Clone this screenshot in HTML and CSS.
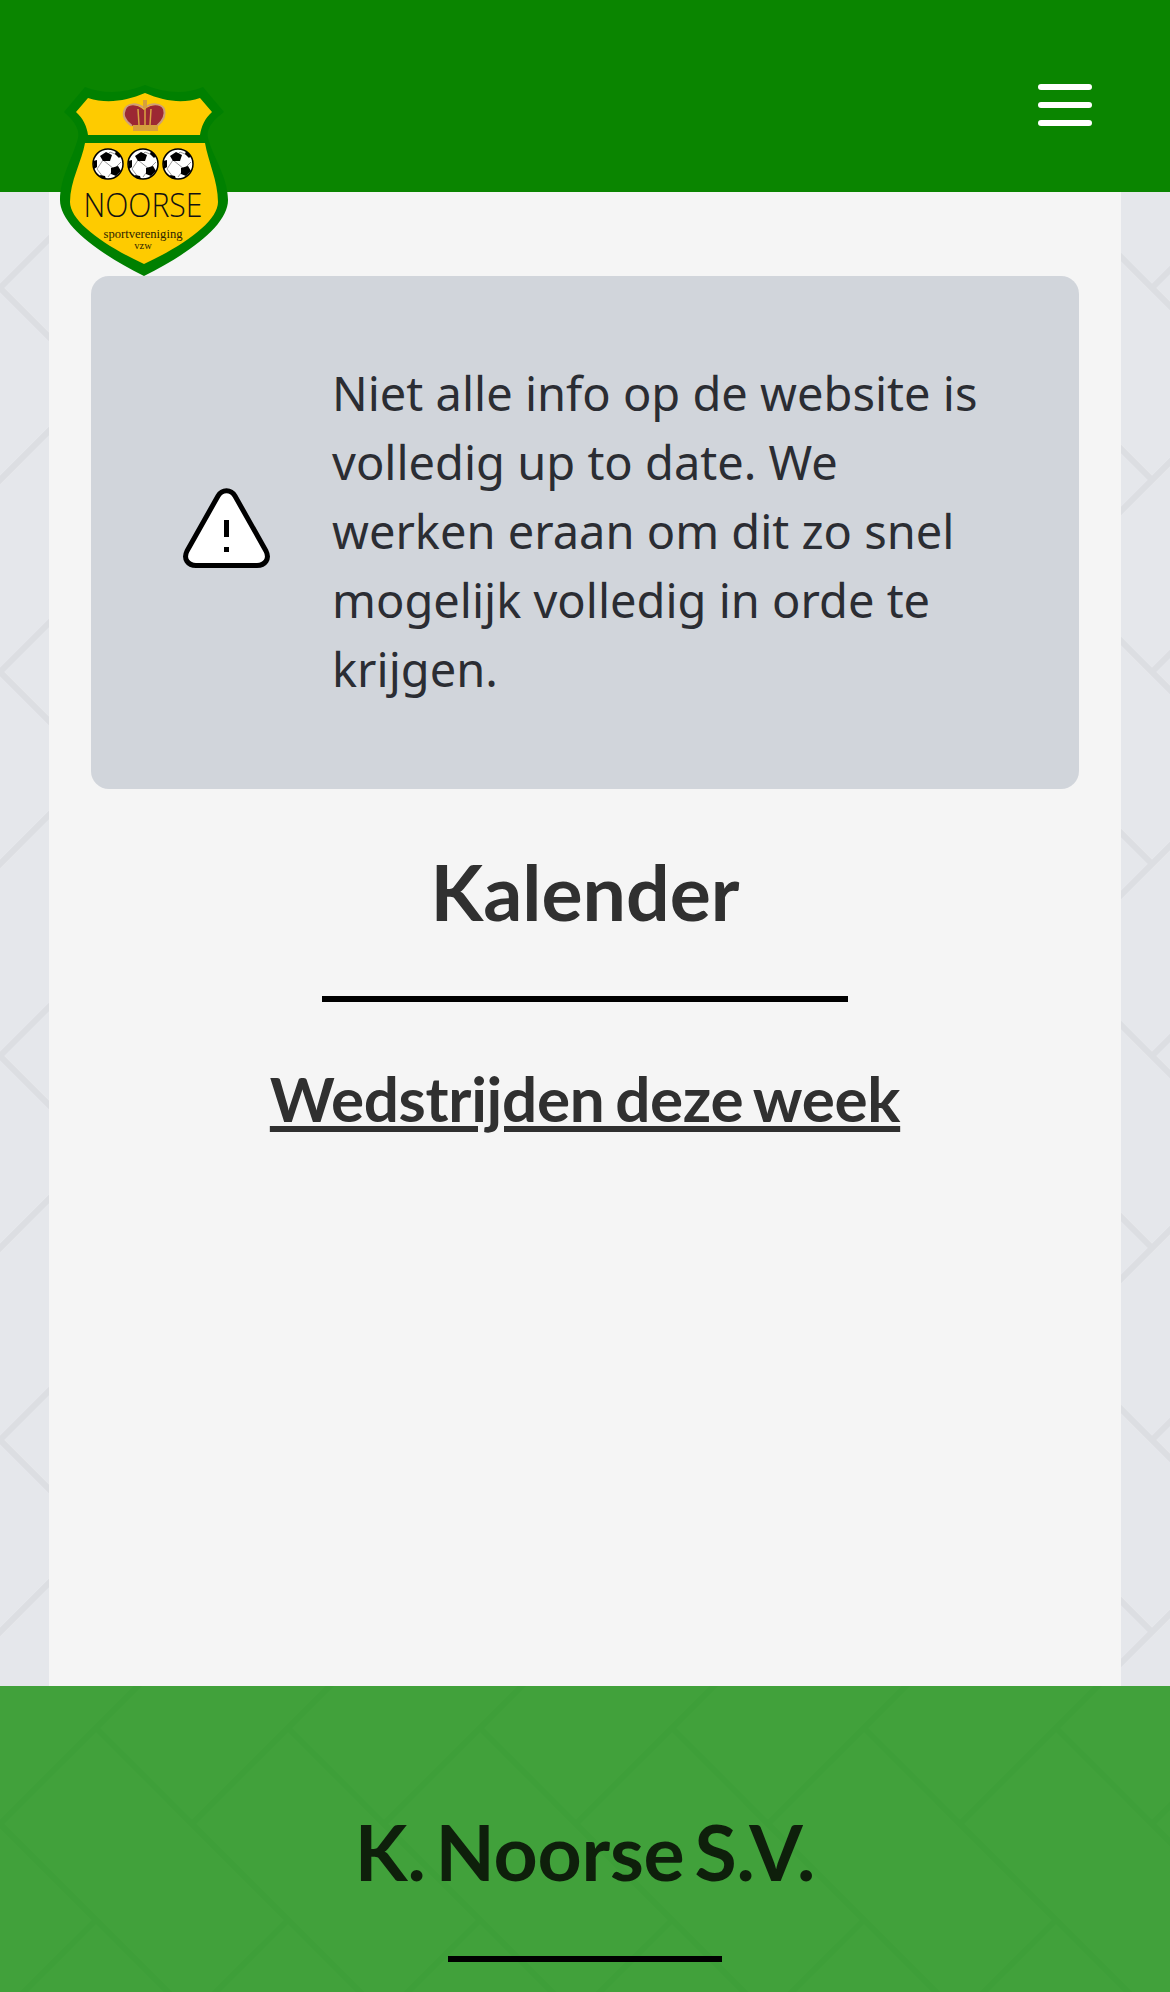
FILE: index.html
```html
<!DOCTYPE html>
<html lang="nl">
<head>
<meta charset="utf-8">
<title>K. Noorse S.V.</title>
<link rel="stylesheet" href="styles.css">
</head>
<body>
<header class="topbar">
  <a class="logo" href="#" aria-label="Noorse sportvereniging vzw">
    <svg viewBox="0 0 168 192" width="168" height="192">
      <defs>
        <g id="ball">
          <circle class="ball" cx="0" cy="0" r="15"/>
          <path class="seam" d="M-5 -4 L6 5 M-5 -4 L-11 5 M6 5 L0 13 M6 5 L13 -2 M-5 -4 L2 -12 M2 -12 L12 -8 M-11 5 L-5 13"/>
          <path class="patch" d="M-8 -8 L-2 -12 L4 -9 L2 -3 L-5 -3 Z"/>
          <path class="patch" d="M3 4 L10 2 L13 7 L8 12 L3 10 Z"/>
          <path class="patch" d="M-15 -3 L-11 -4 L-11 3 L-14 5 Z"/>
          <path class="patch" d="M8 -13 L13 -8 L11 -6 L7 -10 Z"/>
          <path class="patch" d="M-8 11 L-3 12 L-2 15 L-7 14 Z"/>
        </g>
      </defs>
      <path class="shield-edge" d="M25 2 C45 10 65 8 85 0 C105 8 125 10 143 2 L164 27 C152 36 146 44 148 53 C152 70 168 92 168 115 C168 140 130 168 84 191 C38 168 0 140 0 115 C0 92 14 70 18 53 C20 44 14 36 4 27 Z"/>
      <path class="shield-fill" d="M28 13 C47 19 66 16 85 8 C104 16 122 19 140 13 L152 27 C145 33 141 42 140 50 L28 50 C27 42 23 33 16 27 Z"/>
      <path class="shield-fill" d="M25 58 L145 58 C148 76 158 96 158 117 C158 136 125 160 84 179 C43 160 10 136 10 117 C10 96 22 76 25 58 Z"/>
      <path class="crown-red" d="M72 41 C66 38 63 30 65 25 C67 19 76 18 84 25 C92 18 102 19 104 25 C106 30 102 38 97 41 Z"/>
      <path class="crown-rim" d="M72 41 C65 36 62 30 65 24 C68 18 77 18 84 23 C91 18 101 18 104 24 C106 30 103 36 97 41"/>
      <path class="crown-line" d="M85 17 V40 M78 24 L79 40 M91 24 L90 40"/>
      <rect class="crown-gold" x="73" y="40" width="25" height="6"/>
      <rect class="crown-gold" x="83" y="15" width="4" height="8"/>
      <use href="#ball" x="48" y="79"/>
      <use href="#ball" x="83" y="79"/>
      <use href="#ball" x="118" y="79"/>
      <text class="logo-name" x="83" y="132" textLength="119" lengthAdjust="spacingAndGlyphs">NOORSE</text>
      <text class="logo-sub" x="83" y="152.5" textLength="79" lengthAdjust="spacingAndGlyphs">sportvereniging</text>
      <text class="logo-vzw" x="83" y="164">vzw</text>
    </svg>
  </a>
  <button class="menu" aria-label="Menu">
    <span class="menu-bar"></span>
    <span class="menu-bar"></span>
    <span class="menu-bar"></span>
  </button>
</header>
<main class="panel">
  <section class="alert">
    <svg class="alert-icon" viewBox="0 0 93 84" width="93" height="84">
      <path class="alert-tri" d="M38 10 C42 3 51 3 55 10 L86 65 C90 73 85 79.5 77 79.5 L16 79.5 C8 79.5 3 73 7 65 Z"/>
      <path class="alert-mark" d="M46.5 34 V51"/>
      <path class="alert-mark" d="M46.5 61 V66"/>
    </svg>
    <p class="alert-text">Niet alle info op de website is volledig up to date. We werken eraan om dit zo snel mogelijk volledig in orde te krijgen.</p>
  </section>
  <h1 class="page-title">Kalender</h1>
  <hr class="rule">
  <h2 class="sub-title">Wedstrijden deze week</h2>
</main>
<footer class="footer">
  <h2 class="footer-title">K. Noorse S.V.</h2>
  <hr class="footer-rule">
</footer>
</body>
</html>
```
FILE: styles.css
```css
* { box-sizing: border-box; }
html, body { margin: 0; padding: 0; }
body {
  height: 1992px;
  overflow: hidden;
  display: flex;
  flex-direction: column;
  background-color: #e5e7eb;
  background-image: url("data:image/svg+xml,%3Csvg xmlns='http://www.w3.org/2000/svg' width='192' height='384'%3E%3Cg fill='none' stroke='%23dcdee2' stroke-width='6'%3E%3Cpath d='M0 288L288 0M-192 288L96 0M0 672L288 384M-192 672L96 384M192 288L480 0'/%3E%3Cpath d='M96 192L384 480M-96 192L192 480M-96 -192L192 96M96 -192L384 96M-288 192L0 480M-288 -192L0 96'/%3E%3C/g%3E%3C/svg%3E");
  background-size: 192px 384px;
  font-family: "Noto Sans", sans-serif;
}
.topbar {
  position: relative;
  flex: none;
  height: 192px;
  background: #0a8500;
  display: flex;
  justify-content: flex-end;
  z-index: 2;
}
.logo {
  position: absolute;
  left: 60px;
  top: 85px;
  width: 168px;
  height: 192px;
}
.logo svg { display: block; overflow: visible; }
.shield-edge { fill: #008000; }
.shield-fill { fill: #fecb00; }
.crown-red { fill: #9c2833; }
.crown-rim { fill: none; stroke: #cf9f78; stroke-width: 2; }
.crown-line { fill: none; stroke: #d9a441; stroke-width: 1.5; }
.crown-gold { fill: #d6a03c; }
.ball { fill: #fff; stroke: #000; stroke-width: 1.5; }
.seam { fill: none; stroke: #555; stroke-width: 0.6; }
.patch { fill: #000; }
.logo-name {
  font-family: "Open Sans", sans-serif;
  font-size: 33.5px;
  font-weight: 300;
  text-anchor: middle;
  fill: #111;
}
.logo-sub, .logo-vzw {
  font-family: "Liberation Serif", serif;
  text-anchor: middle;
  fill: #2b2400;
}
.logo-sub { font-size: 12px; }
.logo-vzw { font-size: 10.5px; }
.menu {
  margin: 84px 78px 0 0;
  padding: 0;
  width: 54px;
  height: 42px;
  border: 0;
  background: none;
  display: flex;
  flex-direction: column;
  justify-content: space-between;
}
.menu-bar {
  display: block;
  height: 6px;
  border-radius: 3px;
  background: #fff;
}
.panel {
  flex: 1;
  width: 1072px;
  margin-left: 49px;
  padding: 84px 42px 0;
  background: #f5f5f5;
  color: #303030;
}
.alert {
  height: 513px;
  border-radius: 18px;
  background: #d1d5db;
  display: flex;
  align-items: center;
  padding: 0 87px 0 89px;
  gap: 59px;
}
.alert-icon { flex: none; margin-bottom: 9px; }
.alert-tri { fill: #fff; stroke: #000; stroke-width: 5; stroke-linejoin: round; }
.alert-mark { fill: none; stroke: #000; stroke-width: 5; }
.alert-text {
  margin: 0 0 2px;
  font-size: 47px;
  line-height: 69px;
  color: #2b2d33;
}
.page-title, .sub-title, .footer-title {
  font-family: Lato, sans-serif;
  font-weight: 700;
  text-align: center;
  margin: 0;
}
.page-title {
  margin-top: 55px;
  font-size: 77px;
  line-height: 94px;
}
.rule {
  width: 526px;
  height: 6px;
  margin: 58px auto 0;
  border: 0;
  background: #000;
}
.sub-title {
  margin-top: 59px;
  font-size: 62px;
  line-height: 74px;
  letter-spacing: -0.3px;
  word-spacing: -4px;
  text-decoration: underline;
}
.footer {
  flex: none;
  height: 306px;
  padding-top: 118px;
  background-color: rgba(10, 137, 0, 0.75);
}
.footer-title {
  font-size: 77px;
  line-height: 94px;
  letter-spacing: -0.2px;
  word-spacing: -8.5px;
  color: #0e1f0b;
}
.footer-rule {
  width: 274px;
  height: 6px;
  margin: 58px auto 0;
  border: 0;
  background: #000;
}
```
